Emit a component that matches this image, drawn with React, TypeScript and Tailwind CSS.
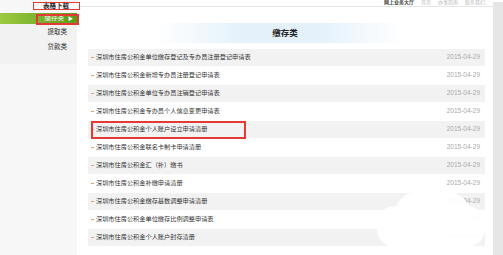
const ROWS = [
  "深圳市住房公积金单位缴存登记及专办员注册登记申请表",
  "深圳市住房公积金新增专办员注册登记申请表",
  "深圳市住房公积金单位专办员注销登记申请表",
  "深圳市住房公积金专办员个人信息变更申请表",
  "深圳市住房公积金个人账户设立申请清册",
  "深圳市住房公积金联名卡制卡申请清册",
  "深圳市住房公积金汇（补）缴书",
  "深圳市住房公积金补缴申请清册",
  "深圳市住房公积金缴存基数调整申请清册",
  "深圳市住房公积金单位缴存比例调整申请表",
  "深圳市住房公积金个人账户封存清册",
];

export default function App() {
  return (
    <div className="relative flex w-[503px] h-[255px] overflow-hidden bg-white font-['Liberation_Sans','Noto_Sans_CJK_SC',sans-serif] text-[#333]">
      {/* sidebar */}
      <div className="w-[77px] flex flex-col bg-[#f2f2f2]">
        <div className="h-[13px] flex items-center justify-end pr-[5px] bg-[#f7f7f7]">
          <span className="text-[6.5px] leading-none font-bold text-[#222] mr-[3px]">表格下载</span>
        </div>
        <div className="h-[11px] flex items-center justify-end pr-[4px] bg-gradient-to-r from-[#9ccb3f] to-[#5c9a1b] text-white">
          <span className="text-[6.5px] leading-none">缴存类</span>
          <span className="text-[5px] leading-none ml-[4px]">▶</span>
        </div>
        <div className="h-[40px] flex flex-col items-end pr-[10px] pt-[5px] gap-[8px] text-[6.5px] leading-none">
          <span>提取类</span>
          <span>贷款类</span>
        </div>
        <div className="flex-1 bg-[#f7f7f7]" />
      </div>

      {/* main */}
      <div className="flex-1 ml-[3px] flex flex-col">
        <div className="h-[7px] flex justify-end items-start gap-[7px] pr-[8px] border-b border-[#e6e6e6]">
          <span className="text-[5px] leading-[5px] font-bold text-[#444]">网上业务大厅</span>
          <span className="text-[5px] leading-[5px] text-[#bbb]">首页</span>
          <span className="text-[5px] leading-[5px] text-[#bbb]">办事指南</span>
          <span className="text-[5px] leading-[5px] text-[#bbb]">联系我们</span>
        </div>
        <div className="mt-[16px] ml-[75px] w-[250px] h-[20px] flex items-center justify-center bg-[linear-gradient(90deg,#ffffff_0%,#e4f1fb_35%,#e4f1fb_65%,#ffffff_100%)]">
          <span className="text-[8.5px] font-bold text-[#222] ml-[10px]">缴存类</span>
        </div>
        <div className="mt-[6px] mx-[8px] flex flex-col">
          {ROWS.map((t, i) => (
            <div
              key={t}
              className={`h-[17px] mb-[1px] flex items-center justify-between pl-[3px] pr-[5px] ${i % 2 === 0 ? "bg-[#f2f2f2]" : "bg-white"}`}
            >
              <div className="flex items-center">
                <span className="w-[3px] h-[1px] bg-[#e59a7c] mr-[2px]" />
                <span className="text-[6.2px] leading-none text-[#333]">{t}</span>
              </div>
              <span className="text-[6.5px] leading-none text-[#aaa]">2015-04-29</span>
            </div>
          ))}
        </div>
      </div>

      {/* scrollbar strip */}
      <div className="w-[10px] mt-[2px] bg-[#e6e6e6]" />

      {/* annotations */}
      <div className="absolute left-[33px] top-[2px] w-[47px] h-[8px] border border-[#e53935]" />
      <div className="absolute left-[36px] top-[14px] w-[43px] h-[11px] border-2 border-[#e53935]" />
      <div className="absolute left-[91px] top-[121px] w-[155px] h-[18px] border-2 border-[#e53935]" />

      {/* watermark blob */}
      <div className="absolute left-[395px] top-[192px] w-[75px] h-[30px] rounded-t-[22px] bg-white/95" />
      <div className="absolute left-[377px] top-[206px] w-[108px] h-[41px] rounded-[18px] bg-white/95" />
    </div>
  );
}
